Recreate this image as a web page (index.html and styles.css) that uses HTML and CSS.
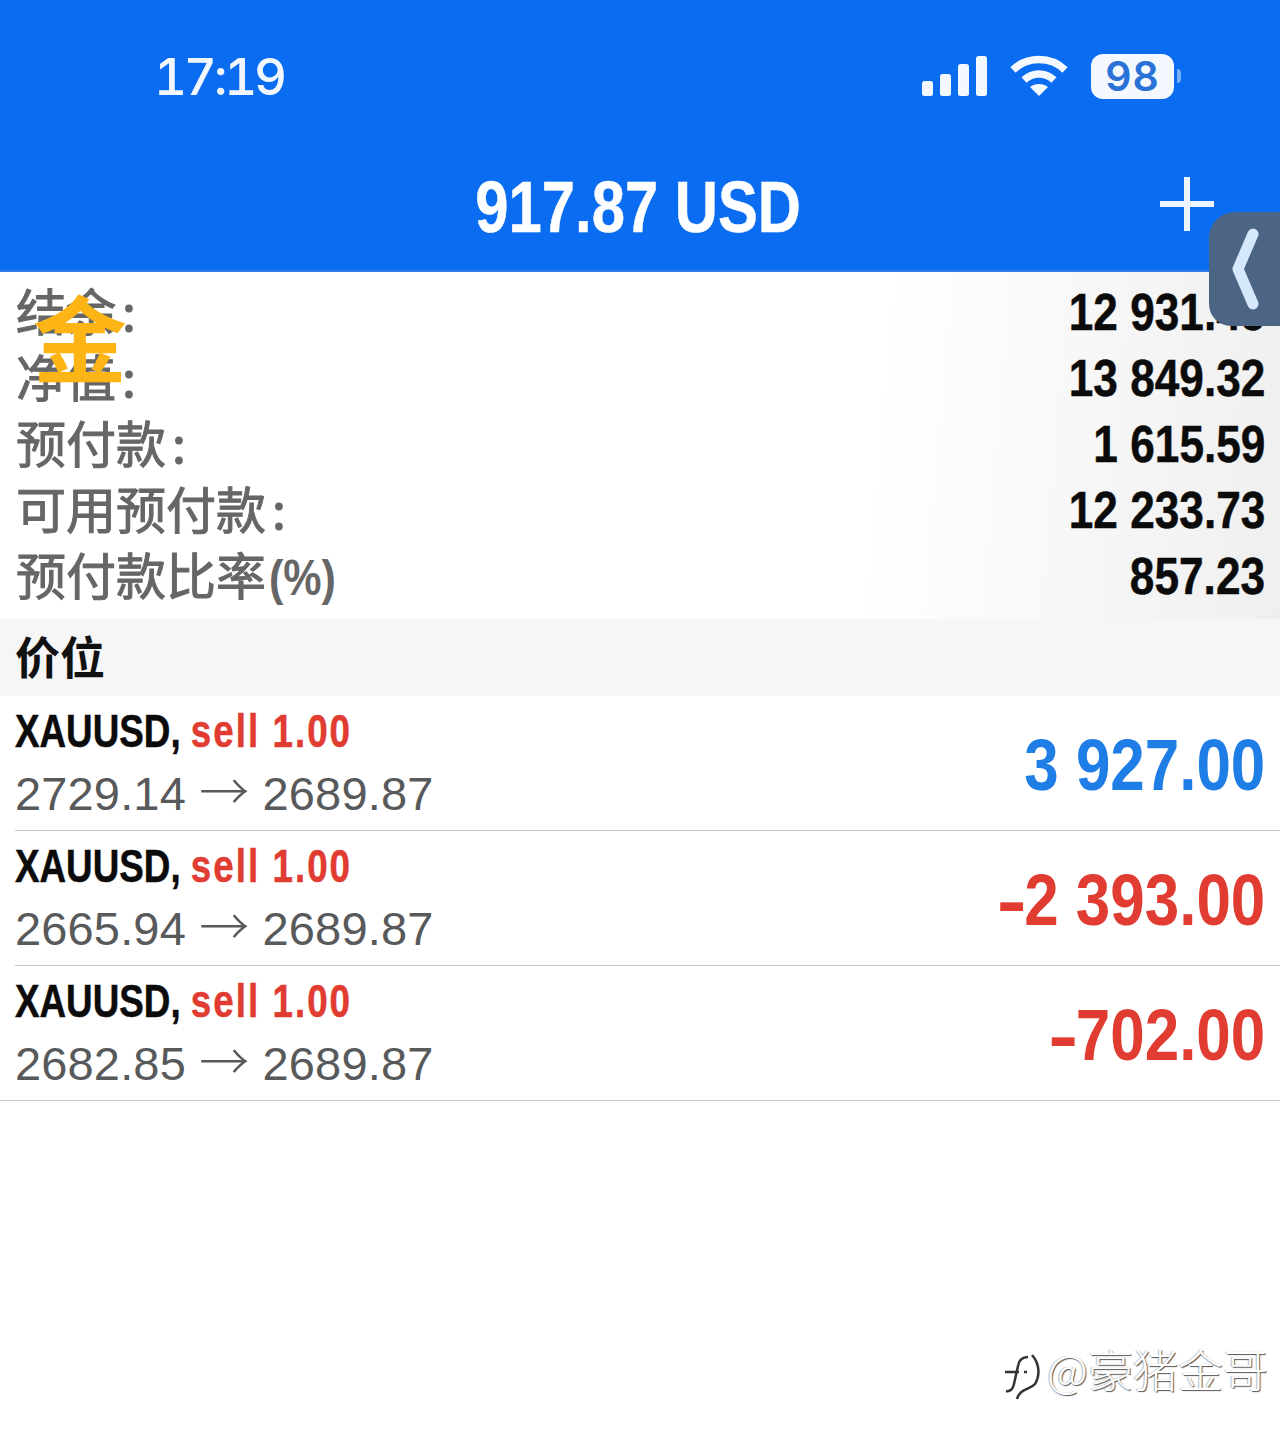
FILE: index.html
```html
<!DOCTYPE html>
<html>
<head>
<meta charset="utf-8">
<title>917.87 USD</title>
<link rel="stylesheet" href="styles.css">
</head>
<body>
<div class="page">
	<div class="header">
		<div class="status">
			<span class="time">17:19</span>
			<div class="status-icons">
				<svg class="signal" width="65" height="41" viewBox="0 0 65 41">
					<rect x="0" y="25" width="11" height="15" rx="2.5"/>
					<rect x="18" y="18" width="11" height="22" rx="2.5"/>
					<rect x="36" y="8" width="11" height="32" rx="2.5"/>
					<rect x="54" y="0" width="11" height="40" rx="2.5"/>
				</svg>
				<svg class="wifi" width="58" height="42" viewBox="0 0 58 42">
					<path d="M3 15 C17 1 41 1 55 15" class="wifi-arc"/>
					<path d="M14 25 C23 17 35 17 44 25" class="wifi-arc"/>
					<path d="M29 41 L20 32 C25 28 33 28 38 32 Z"/>
				</svg>
				<div class="battery"><span class="battery-num">98</span></div>
				<div class="battery-nub"></div>
			</div>
		</div>
		<div class="titlebar">
			<span></span>
			<span class="title">917.87 USD</span>
			<svg class="plus" width="56" height="56" viewBox="0 0 56 56">
				<path d="M28 1 V55 M1 28 H55"/>
			</svg>
		</div>
	</div>

	<div class="summary">
		<div class="sum-row"><span class="sum-label">结余<span class="colon">:</span></span><span class="sum-value">12 931.45</span></div>
		<div class="sum-row"><span class="sum-label">净值<span class="colon">:</span></span><span class="sum-value">13 849.32</span></div>
		<div class="sum-row"><span class="sum-label">预付款<span class="colon">:</span></span><span class="sum-value">1 615.59</span></div>
		<div class="sum-row"><span class="sum-label">可用预付款<span class="colon">:</span></span><span class="sum-value">12 233.73</span></div>
		<div class="sum-row"><span class="sum-label">预付款比率<span class="pct">(%)</span></span><span class="sum-value">857.23</span></div>
	</div>

	<div class="section"><span class="section-text">价位</span></div>

	<div class="pos">
		<div class="pos-inner">
			<div class="pos-info">
				<div class="pos-name">XAUUSD, <span class="sell">sell 1.00</span></div>
				<div class="pos-price">2729.14 <span class="arrow">→</span> 2689.87</div>
			</div>
			<div class="pos-amount blue">3 927.00</div>
		</div>
	</div>
	<div class="pos">
		<div class="pos-inner">
			<div class="pos-info">
				<div class="pos-name">XAUUSD, <span class="sell">sell 1.00</span></div>
				<div class="pos-price">2665.94 <span class="arrow">→</span> 2689.87</div>
			</div>
			<div class="pos-amount red"><span class="minus">-</span>2 393.00</div>
		</div>
	</div>
	<div class="pos pos-last">
		<div class="pos-inner">
			<div class="pos-info">
				<div class="pos-name">XAUUSD, <span class="sell">sell 1.00</span></div>
				<div class="pos-price">2682.85 <span class="arrow">→</span> 2689.87</div>
			</div>
			<div class="pos-amount red"><span class="minus">-</span>702.00</div>
		</div>
	</div>

	<!-- things lying over the page -->
	<div class="gold">金</div>
	<div class="handle">
		<svg width="30" height="84" viewBox="0 0 30 84">
			<path d="M22 7 L7 42 L22 77"/>
		</svg>
	</div>
	<div class="watermark">
		<svg class="wm-logo" width="42" height="50" viewBox="0 0 42 50">
			<path d="M26 5 C20 5 17 8 16 14 L12 32 C11 37 8 40 4 39"/>
			<path d="M3 20 H17 M22 20 H25"/>
			<path d="M30 3 C38 12 38 24 33 32 C28 38 18 36 15 47"/>
		</svg>
		<span class="wm-text">@豪猪金哥</span>
	</div>
</div>
</body>
</html>
```

FILE: styles.css
```css
* { box-sizing: border-box; }
body { margin: 0; background: #fff; font-family: "Liberation Sans", "Noto Sans CJK SC", sans-serif; }

.page { position: relative; width: 1280px; height: 1440px; overflow: hidden; }

/* blue top */
.header { height: 272px; background: #0a6cf0; color: #fff; border-bottom: 2px solid #2f7fe6; }
.status { height: 152px; display: flex; align-items: center; justify-content: space-between; padding: 0 99px 0 154px; }
.time { font-family: Inter, "Liberation Sans", sans-serif; font-size: 51px; font-weight: 500; font-feature-settings: "tnum"; letter-spacing: -3.2px; color: #f2f7ff; }
.status-icons { display: flex; align-items: center; }
.signal { fill: #f4f8ff; margin-right: 23px; }
.wifi { fill: #f4f8ff; margin-right: 23px; }
.wifi-arc { fill: none; stroke: #f4f8ff; stroke-width: 7.5; }
.battery { width: 83px; height: 45px; border-radius: 12px; background: #f4f8ff; display: flex; align-items: center; justify-content: center; }
.battery-num { font-family: Inter, "Liberation Sans", sans-serif; font-size: 41px; font-weight: 600; letter-spacing: 1px; color: #2a72d8; }
.battery-nub { width: 4px; height: 14px; margin-left: 3px; border-radius: 0 6px 6px 0; background: #78b0f5; }

.titlebar { height: 110px; display: grid; grid-template-columns: 1fr auto 1fr; align-items: center; padding: 0 65px 0 61px; }
.title { font-size: 72px; font-weight: 700; color: #fdfeff; transform: scaleX(.83); -webkit-text-stroke: .5px #fdfeff; }
.plus { justify-self: end; margin-top: -6px; }
.plus path { fill: none; stroke: #eef5ff; stroke-width: 6; }

/* account numbers */
.summary { height: 347px; padding: 7px 15px 10px 16px; background: linear-gradient(95deg, #fff 68%, #efefef 100%); }
.sum-row { height: 66px; display: flex; align-items: center; justify-content: space-between; }
.sum-label { padding-bottom: 7px; font-family: "Noto Sans CJK SC", sans-serif; font-size: 50px; font-weight: 400; color: #666; -webkit-text-stroke: 1px #666; }
.colon { margin-left: 6px; }
.pct { display: inline-block; margin-left: 3px; width: 67px; font-family: "Liberation Sans", sans-serif; font-size: 50px; font-weight: 700; -webkit-text-stroke: 0; transform: scaleX(.86); transform-origin: left center; white-space: nowrap; }
.sum-value { font-size: 52px; font-weight: 700; color: #0b0b0b; transform: scaleX(.85); transform-origin: right center; -webkit-text-stroke: .5px #0b0b0b; }

.section { height: 77px; padding: 0 0 4px 15px; display: flex; align-items: center; background: #f6f6f6; }
.section-text { font-family: "Noto Sans CJK SC", sans-serif; font-size: 45px; font-weight: 700; color: #111; }

/* positions */
.pos { padding-left: 15px; }
.pos-inner { height: 135px; padding: 0 15px 0 0; display: flex; align-items: center; justify-content: space-between; border-bottom: 1px solid #c8c8c8; }
.pos-last { padding-left: 0; }
.pos-last .pos-inner { padding-left: 15px; }
.pos-info { display: flex; flex-direction: column; }
.pos-name { height: 63px; line-height: 63px; font-size: 46px; font-weight: 700; color: #0b0b0b; transform: scaleX(.8); transform-origin: left center; white-space: nowrap; -webkit-text-stroke: .5px #0b0b0b; }
.sell { color: #e03c31; letter-spacing: 2.5px; -webkit-text-stroke: .5px #e03c31; }
.pos-price { height: 63px; line-height: 59px; font-size: 47px; letter-spacing: .15px; color: #58595b; white-space: nowrap; }
.arrow { font-family: "Noto Sans CJK SC", sans-serif; font-size: 50px; font-weight: 300; line-height: 1; }
.pos-amount { padding-top: 4px; font-size: 72px; font-weight: 700; transform: scaleX(.86); transform-origin: right center; }
.minus { display: inline-block; margin-right: 8px; transform: scaleX(1.45); transform-origin: left center; }
.blue { color: #1f7de6; }
.red { color: #e03c31; }

/* overlays */
.gold { position: absolute; left: 33px; top: 270px; font-family: "Noto Sans CJK SC", sans-serif; font-size: 94px; line-height: 130px; font-weight: 700; color: #fdb515; }
.handle { position: absolute; right: 0; top: 212px; width: 71px; height: 114px; padding-left: 22px; display: flex; align-items: center; background: #4c6585; border-radius: 26px 0 0 22px; }
.handle path { fill: none; stroke: #d6e8fb; stroke-width: 11; stroke-linecap: round; stroke-linejoin: round; }
.watermark { position: absolute; left: 1002px; top: 1334px; display: flex; align-items: center; }
.wm-logo { margin-right: 3px; margin-top: 18px; }
.wm-logo path { fill: none; stroke: #333; stroke-width: 2.5; }
.wm-text { font-family: "Noto Sans CJK SC", sans-serif; font-size: 45px; font-weight: 300; color: #fff; text-shadow: 1px 1px 1px #555, -1px 0 1px #bbb; }
```
